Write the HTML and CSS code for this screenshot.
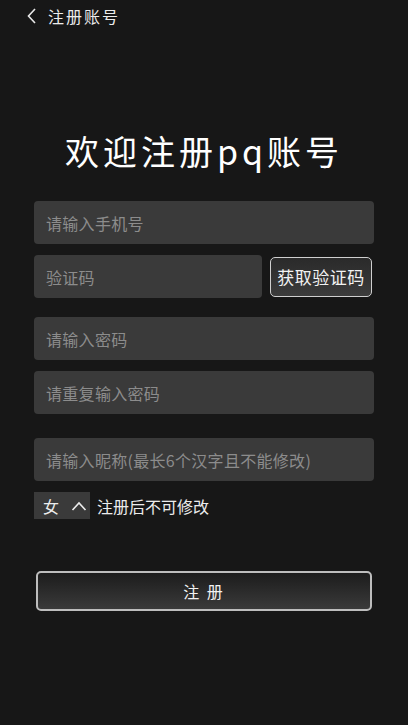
FILE: index.html
```html
<!DOCTYPE html>
<html lang="zh">
<head>
<meta charset="utf-8">
<link rel="stylesheet" href="styles.css">
</head>
<body>
<div class="page">
  <header class="topbar">
    <svg class="back" width="12" height="18" viewBox="0 0 12 18"><path d="M9 2 L2.5 9 L9 16" fill="none" stroke="#e8e8e8" stroke-width="1.6"/></svg>
    <span class="topbar-title">注册账号</span>
  </header>
  <h1 class="welcome">欢迎注册pq账号</h1>
  <form class="form">
    <div class="field">请输入手机号</div>
    <div class="row">
      <div class="field code">验证码</div>
      <button type="button" class="getcode">获取验证码</button>
    </div>
    <div class="field pw">请输入密码</div>
    <div class="field">请重复输入密码</div>
    <div class="field nick">请输入昵称(最长6个汉字且不能修改)</div>
    <div class="gender-row">
      <div class="gender"><span>女</span>
        <svg width="16" height="10" viewBox="0 0 16 10"><path d="M1.5 9 L8 2 L14.5 9" fill="none" stroke="#ececec" stroke-width="1.6"/></svg>
      </div>
      <span class="note">注册后不可修改</span>
    </div>
    <button type="button" class="submit">注 册</button>
  </form>
</div>
</body>
</html>
```
FILE: styles.css
```css
html, body {
  margin: 0;
  padding: 0;
  background: #171717;
}
body {
  font-family: "Noto Sans CJK SC", "Noto Sans", sans-serif;
  color: #eeeeee;
  width: 408px;
  height: 725px;
  overflow: hidden;
}
.page {
  display: flex;
  flex-direction: column;
}
.topbar {
  height: 32px;
  display: flex;
  align-items: center;
  padding-left: 26px;
}
.back {
  display: block;
  margin-right: 10px;
}
.topbar-title {
  font-size: 16px;
  letter-spacing: 2px;
  color: #ececec;
}
.welcome {
  margin: 97px 0 0 0;
  text-align: center;
  font-weight: normal;
  font-size: 34px;
  line-height: 44px;
  letter-spacing: 4px;
  color: #ffffff;
}
.form {
  margin: 28px 0 0 34px;
  width: 340px;
  display: flex;
  flex-direction: column;
}
.field {
  height: 43px;
  background: #3a3a3a;
  border-radius: 4px;
  display: flex;
  align-items: center;
  padding-left: 12px;
  font-size: 16px;
  letter-spacing: 0.3px;
  color: #8c8c8c;
  box-sizing: border-box;
}
.row {
  display: flex;
  align-items: center;
  margin-top: 11px;
}
.code {
  width: 228px;
}
.getcode {
  margin-left: 8px;
  width: 102px;
  height: 40px;
  border: 1.5px solid #cfcfcf;
  border-radius: 5px;
  background: linear-gradient(to bottom, #2a2a2a, #3c3c3c);
  color: #f2f2f2;
  font-family: inherit;
  font-size: 17px;
  letter-spacing: 0.5px;
  padding: 0;
}
.pw {
  margin-top: 19px;
}
.pw + .field {
  margin-top: 11px;
}
.nick {
  margin-top: 24px;
}
.gender-row {
  margin-top: 11px;
  display: flex;
  align-items: center;
}
.gender {
  width: 56px;
  height: 27px;
  background: #3a3a3a;
  display: flex;
  align-items: center;
  padding-left: 9px;
  box-sizing: border-box;
  font-size: 16px;
  color: #ececec;
  gap: 12px;
}
.gender svg {
  display: block;
}
.note {
  margin-left: 7px;
  font-size: 16px;
  color: #ececec;
}
.submit {
  margin: 52px 0 0 2px;
  width: 336px;
  height: 40px;
  border: 2px solid #bdbdbd;
  border-radius: 5px;
  background: linear-gradient(to bottom, #1c1c1c, #3a3a3a);
  color: #f2f2f2;
  font-family: inherit;
  font-size: 16px;
  letter-spacing: 2px;
  padding: 0;
}
```
